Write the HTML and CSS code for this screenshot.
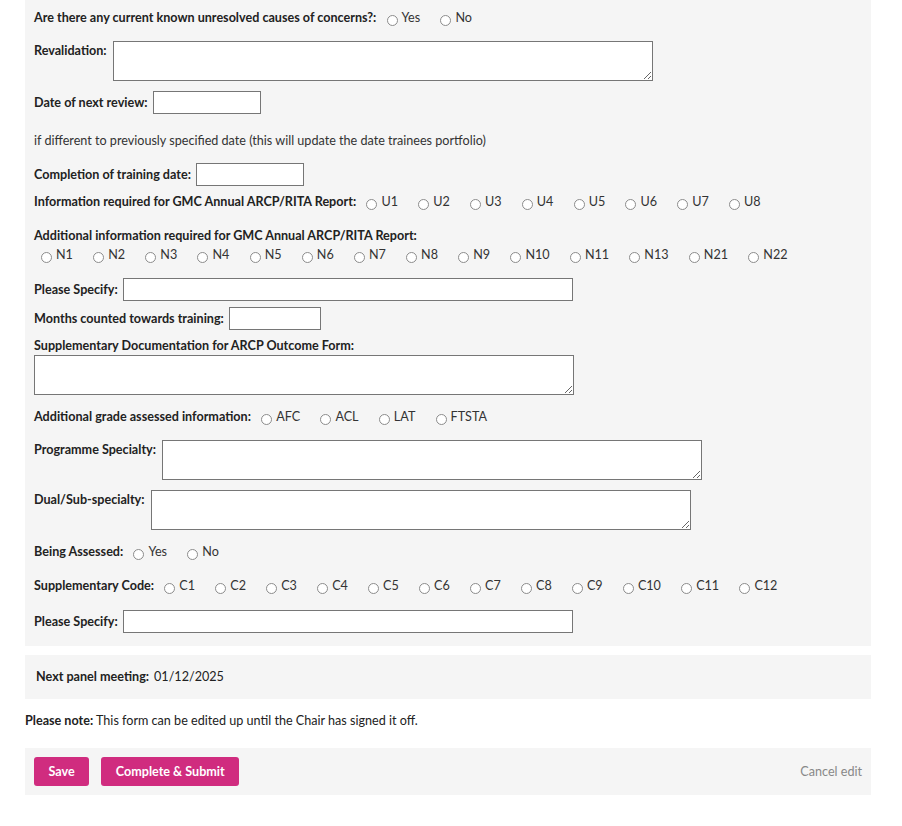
FILE: index.html
```html
<!DOCTYPE html>
<html lang="en">
<head>
<meta charset="utf-8">
<title>ARCP Outcome Form</title>
<link rel="stylesheet" href="styles.css">
</head>
<body>
<div class="page">
  <form class="panel form-panel">
    <div class="field radios f-concerns">
      <span class="lbl">Are there any current known unresolved causes of concerns?:</span>
      <label class="opt"><input type="radio" name="concerns">Yes</label>
      <label class="opt"><input type="radio" name="concerns">No</label>
    </div>

    <div class="field top f-reval">
      <span class="lbl pad">Revalidation:</span>
      <textarea class="ta"></textarea>
    </div>

    <div class="field mid f-review">
      <span class="lbl">Date of next review:</span>
      <input type="text" class="inp w108">
    </div>

    <p class="hint">if different to previously specified date (this will update the date trainees portfolio)</p>

    <div class="field mid f-complete">
      <span class="lbl">Completion of training date:</span>
      <input type="text" class="inp w108">
    </div>

    <div class="field radios f-gmc">
      <span class="lbl">Information required for GMC Annual ARCP/RITA Report:</span>
      <label class="opt"><input type="radio" name="u">U1</label>
      <label class="opt"><input type="radio" name="u">U2</label>
      <label class="opt"><input type="radio" name="u">U3</label>
      <label class="opt"><input type="radio" name="u">U4</label>
      <label class="opt"><input type="radio" name="u">U5</label>
      <label class="opt"><input type="radio" name="u">U6</label>
      <label class="opt"><input type="radio" name="u">U7</label>
      <label class="opt"><input type="radio" name="u">U8</label>
    </div>

    <div class="field f-addl">
      <span class="lbl block">Additional information required for GMC Annual ARCP/RITA Report:</span>
      <div class="radios nrow">
        <label class="opt"><input type="radio" name="n">N1</label>
        <label class="opt"><input type="radio" name="n">N2</label>
        <label class="opt"><input type="radio" name="n">N3</label>
        <label class="opt"><input type="radio" name="n">N4</label>
        <label class="opt"><input type="radio" name="n">N5</label>
        <label class="opt"><input type="radio" name="n">N6</label>
        <label class="opt"><input type="radio" name="n">N7</label>
        <label class="opt"><input type="radio" name="n">N8</label>
        <label class="opt"><input type="radio" name="n">N9</label>
        <label class="opt"><input type="radio" name="n">N10</label>
        <label class="opt"><input type="radio" name="n">N11</label>
        <label class="opt"><input type="radio" name="n">N13</label>
        <label class="opt"><input type="radio" name="n">N21</label>
        <label class="opt"><input type="radio" name="n">N22</label>
      </div>
    </div>

    <div class="field mid f-spec1">
      <span class="lbl">Please Specify:</span>
      <input type="text" class="inp w450">
    </div>

    <div class="field mid f-months">
      <span class="lbl">Months counted towards training:</span>
      <input type="text" class="inp w92">
    </div>

    <div class="field f-suppdoc">
      <span class="lbl block">Supplementary Documentation for ARCP Outcome Form:</span>
      <textarea class="ta ta-block"></textarea>
    </div>

    <div class="field radios f-grade">
      <span class="lbl">Additional grade assessed information:</span>
      <label class="opt"><input type="radio" name="g">AFC</label>
      <label class="opt"><input type="radio" name="g">ACL</label>
      <label class="opt"><input type="radio" name="g">LAT</label>
      <label class="opt"><input type="radio" name="g">FTSTA</label>
    </div>

    <div class="field top f-prog">
      <span class="lbl pad">Programme Specialty:</span>
      <textarea class="ta"></textarea>
    </div>

    <div class="field top f-dual">
      <span class="lbl pad">Dual/Sub-specialty:</span>
      <textarea class="ta"></textarea>
    </div>

    <div class="field radios f-assessed">
      <span class="lbl">Being Assessed:</span>
      <label class="opt"><input type="radio" name="a">Yes</label>
      <label class="opt"><input type="radio" name="a">No</label>
    </div>

    <div class="field radios f-code">
      <span class="lbl">Supplementary Code:</span>
      <label class="opt"><input type="radio" name="c">C1</label>
      <label class="opt"><input type="radio" name="c">C2</label>
      <label class="opt"><input type="radio" name="c">C3</label>
      <label class="opt"><input type="radio" name="c">C4</label>
      <label class="opt"><input type="radio" name="c">C5</label>
      <label class="opt"><input type="radio" name="c">C6</label>
      <label class="opt"><input type="radio" name="c">C7</label>
      <label class="opt"><input type="radio" name="c">C8</label>
      <label class="opt"><input type="radio" name="c">C9</label>
      <label class="opt"><input type="radio" name="c">C10</label>
      <label class="opt"><input type="radio" name="c">C11</label>
      <label class="opt"><input type="radio" name="c">C12</label>
    </div>

    <div class="field mid f-spec2">
      <span class="lbl">Please Specify:</span>
      <input type="text" class="inp w450">
    </div>
  </form>

  <div class="panel meeting">
    <span class="lbl">Next panel meeting:</span>
    <span class="val">01/12/2025</span>
  </div>

  <p class="note"><strong>Please note:</strong> This form can be edited up until the Chair has signed it off.</p>

  <div class="panel actions">
    <div class="btns">
      <button type="button" class="btn">Save</button>
      <button type="button" class="btn">Complete &amp; Submit</button>
    </div>
    <a class="cancel" href="#">Cancel edit</a>
  </div>
</div>
</body>
</html>
```

FILE: styles.css
```css
* { box-sizing: border-box; }

body {
  margin: 0;
  font-family: Lato, "Open Sans", "Liberation Sans", sans-serif;
  font-size: 12.6px;
  line-height: 16px;
  color: #333;
  background: #fff;
}

.page {
  width: 871px;
  padding-left: 25px;
}

.panel {
  background: #f5f5f5;
}

.form-panel {
  padding: 10px 9px 13px 9px;
  margin: 0;
}

.lbl {
  font-weight: 700;
  color: #222;
}

.lbl.block { display: block; }
.lbl.pad { padding-top: 2px; margin-right: 6.5px; }

.field { margin: 0; }

.field.mid {
  display: flex;
  align-items: center;
}
.field.mid .lbl { margin-right: 5.5px; }

.field.top {
  display: flex;
  align-items: flex-start;
}

.radios { white-space: nowrap; }
.radios > .lbl { margin-right: 1px; }

.opt {
  margin-right: 11px;
}

.nrow { padding-left: 1px; }

.opt input {
  -webkit-appearance: none;
  appearance: none;
  margin: 0 4px 0 6px;
  width: 11px;
  height: 11px;
  border: 1px solid #8c8c8c;
  border-radius: 50%;
  background: #fff;
  vertical-align: -4px;
}

.ta {
  width: 540px;
  height: 40px;
  border: 1px solid #767676;
  background: #fff;
  margin: 0;
  font: inherit;
  display: block;
}

.inp {
  height: 23px;
  border: 1px solid #767676;
  background: #fff;
  margin: 0;
  font: inherit;
  padding: 0 3px;
}

.w108 { width: 108px; }
.w92 { width: 92px; }
.w450 { width: 450px; }

.hint { margin: 19px 0 0 0; }

.f-reval { margin-top: 15px; }
.f-review { margin-top: 10px; }
.f-complete { margin-top: 14px; }
.f-gmc { margin-top: 8px; }
.f-addl { margin-top: 18px; }
.nrow { margin-top: 3px; }
.f-spec1 { margin-top: 15px; }
.f-months { margin-top: 6px; }
.f-suppdoc { margin-top: 8px; }
.ta-block { margin-top: 1px; }
.f-grade { margin-top: 14px; }
.f-prog { margin-top: 15px; }
.f-dual { margin-top: 10px; }
.f-assessed { margin-top: 14px; }
.f-code { margin-top: 18px; }
.f-spec2 { margin-top: 16px; }

.meeting {
  margin-top: 9px;
  height: 44px;
  padding: 0 11px;
  display: flex;
  align-items: center;
  gap: 5px;
}
.meeting .val { color: #222; }

.note {
  margin: 14px 0 0 0;
  color: #222;
}
.note strong { font-weight: 700; }

.actions {
  margin-top: 19px;
  height: 47px;
  padding: 0 9px;
  display: flex;
  align-items: center;
  justify-content: space-between;
}

.btns {
  display: flex;
  gap: 12px;
}

.btn {
  background: #d02c7f;
  color: #fff;
  border: 0;
  border-radius: 3px;
  height: 29px;
  padding: 0 14.5px;
  font: inherit;
  font-weight: 700;
  cursor: pointer;
}

.cancel {
  color: #888;
  text-decoration: none;
}
```
